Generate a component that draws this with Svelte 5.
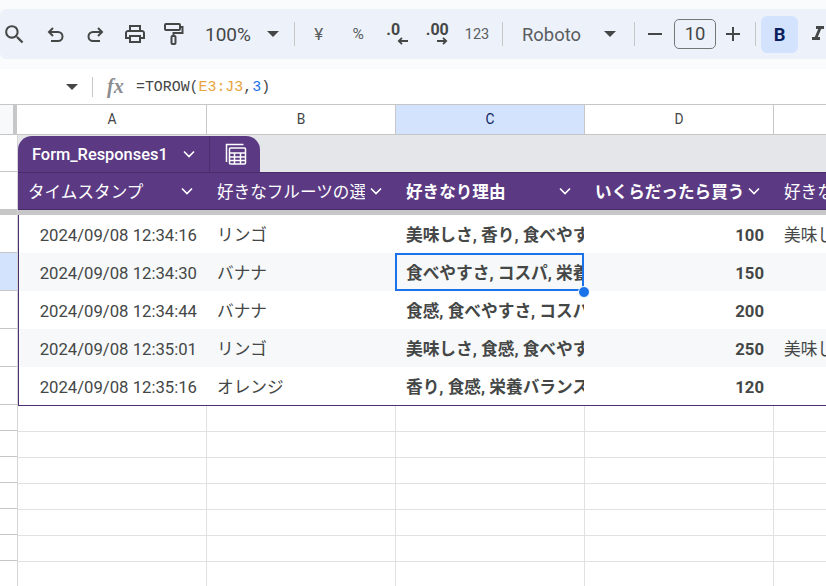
<script lang="ts">
  const columns = ['A', 'B', 'C', 'D', 'E'];
  const headers = [
    { label: 'タイムスタンプ', bold: false },
    { label: '好きなフルーツの選択', bold: false },
    { label: '好きなり理由', bold: true },
    { label: 'いくらだったら買う', bold: true },
    { label: '好きなり理由', bold: false }
  ];
  const rows = [
    { time: '2024/09/08 12:34:16', fruit: 'リンゴ', why: '美味しさ, 香り, 食べやすさ, コスパ', price: 100, extra: '美味しさ' },
    { time: '2024/09/08 12:34:30', fruit: 'バナナ', why: '食べやすさ, コスパ, 栄養バランス', price: 150, extra: '', selected: true },
    { time: '2024/09/08 12:34:44', fruit: 'バナナ', why: '食感, 食べやすさ, コスパ, 栄養', price: 200, extra: '' },
    { time: '2024/09/08 12:35:01', fruit: 'リンゴ', why: '美味しさ, 食感, 食べやすさ, 香り', price: 250, extra: '美味しさ' },
    { time: '2024/09/08 12:35:16', fruit: 'オレンジ', why: '香り, 食感, 栄養バランス, コスパ', price: 120, extra: '' }
  ];
  const emptyRows = [1, 2, 3, 4, 5, 6, 7];
</script>

{#snippet caret()}
  <svg class="caret" width="12" height="6" viewBox="0 0 12 6"><path d="M0 0h12L6 6z" fill="#444746" /></svg>
{/snippet}

{#snippet chevron()}
  <svg class="chev" width="12" height="8" viewBox="0 0 12 8"><path d="M1 1.500 6 6.500l5-5" fill="none" stroke="#fff" stroke-width="1.600" /></svg>
{/snippet}

<div class="page">
  <div class="toolbar-wrap">
    <div class="toolbar">
      <span class="btn search">
        <svg width="25" height="25" viewBox="0 0 24 24"><path fill="#444746" d="M15.500 14h-.79l-.28-.27A6.471 6.471 0 0 0 16 9.500 6.500 6.500 0 1 0 9.500 16c1.610 0 3.090-.59 4.230-1.570l.27.28v.79l5 4.990L20.490 19l-4.990-5zm-6 0C7.010 14 5 11.990 5 9.500S7.010 5 9.500 5 14 7.010 14 9.500 11.990 14 9.500 14z" /></svg>
      </span>
      <span class="btn">
        <svg width="24" height="24" viewBox="0 0 24 24" fill="none" stroke="#444746" stroke-width="2"><path d="M9 6 5 10l4 4M5 10h9a4.500 4.500 0 0 1 0 9H7" /></svg>
      </span>
      <span class="btn">
        <svg width="24" height="24" viewBox="0 0 24 24" fill="none" stroke="#444746" stroke-width="2"><path d="m15 6 4 4-4 4M19 10h-9a4.500 4.500 0 0 0 0 9h7" /></svg>
      </span>
      <span class="btn">
        <svg width="24" height="24" viewBox="0 0 24 24"><path fill="#444746" d="M19 8h-1V3H6v5H5c-1.660 0-3 1.340-3 3v6h4v4h12v-4h4v-6c0-1.660-1.340-3-3-3zM8 5h8v3H8V5zm8 12v2H8v-4h8v2zm2-2v-2H6v2H4v-4c0-.55.45-1 1-1h14c.55 0 1 .45 1 1v4h-2z" /></svg>
      </span>
      <span class="btn">
        <svg width="24" height="24" viewBox="0 0 24 24" fill="none" stroke="#444746" stroke-width="2"><rect x="3" y="2" width="15" height="6" rx="1" /><path d="M18 5h2.500v6H11.500v3" /><rect x="9.500" y="14" width="4" height="8" rx="1" /></svg>
      </span>
      <span class="zoom-val">100%</span>
      {@render caret()}
      <span class="sep s1"></span>
      <span class="btn sym yen">¥</span>
      <span class="btn sym">%</span>
      <span class="btn dec">
        <b>.0</b>
        <svg width="11" height="8" viewBox="0 0 11 8"><path d="M11 4H2M5 .8 1.800 4 5 7.200" fill="none" stroke="#444746" stroke-width="1.800" /></svg>
      </span>
      <span class="btn dec inc">
        <b>.00</b>
        <svg width="11" height="8" viewBox="0 0 11 8"><path d="M0 4h9M6 .8 9.200 4 6 7.200" fill="none" stroke="#444746" stroke-width="1.800" /></svg>
      </span>
      <span class="btn num">123</span>
      <span class="sep s2"></span>
      <span class="font-name">Roboto</span>
      {@render caret()}
      <span class="sep s3"></span>
      <span class="btn tiny">
        <svg width="14" height="2" viewBox="0 0 14 2"><path d="M0 0h14v2H0z" fill="#444746" /></svg>
      </span>
      <span class="size-box">10</span>
      <span class="btn tiny plus">
        <svg width="14" height="14" viewBox="0 0 14 14"><path d="M0 6h14v2H0zM6 0h2v14H6z" fill="#444746" /></svg>
      </span>
      <span class="sep s4"></span>
      <span class="bold-btn">B</span>
      <svg class="italic" width="24" height="24" viewBox="0 0 24 24"><path fill="#444746" d="M10 4v3h2.210l-3.420 8H6v3h8v-3h-2.210l3.420-8H18V4z" /></svg>
    </div>
  </div>

  <div class="formula-bar">
    {@render caret()}
    <span class="sep fsep"></span>
    <span class="fx">fx</span>
    <span class="formula">=TOROW(<span class="ref">E3:J3</span>,<span class="arg">3</span>)</span>
  </div>

  <div class="col-head">
    <div class="corner"></div>
    <div class="freeze"></div>
    {#each columns as col}
      <div class="col-cell" class:active={col === 'C'}>{col}</div>
    {/each}
  </div>

  <div class="sheet">
    <div class="row-head">
      <div class="rh r37"></div>
      <div class="rh r38"></div>
      <div class="rh-bar"></div>
      {#each rows as row}
        <div class="rh r38" class:active={row.selected}></div>
      {/each}
      {#each emptyRows as r (r)}
        <div class="rh r26"></div>
      {/each}
    </div>

    <div class="content">
      <div class="table">
        <div class="strip">
          <div class="tab">
            <span class="tab-name">Form_Responses1</span>
            {@render chevron()}
            <span class="tab-div"></span>
            <svg class="calc" width="22" height="22" viewBox="0 0 22 22" fill="none" stroke="#fff" stroke-width="1.500">
              <path d="M1.500 19V1.500h17" />
              <rect x="4.500" y="5" width="16" height="16" rx="1" />
              <path d="M4.500 10h16M4.500 14h16M4.500 17.500h16M9.500 10v11M15.500 10v11" />
            </svg>
          </div>
        </div>

        <div class="head-row">
          {#each headers as h}
            <div class="head-cell" class:strong={h.bold}>
              <span class="head-label">{h.label}</span>
              {@render chevron()}
            </div>
          {/each}
        </div>
        <div class="head-bar"></div>

        {#each rows as row, i}
          <div class="data-row" class:alt={i % 2 === 1}>
            <div class="cell time"><span class="clip">{row.time}</span></div>
            <div class="cell"><span class="clip">{row.fruit}</span></div>
            <div class="cell strong">
              <span class="clip">{row.why}</span>
              {#if row.selected}
                <span class="select-box"><span class="handle"></span></span>
              {/if}
            </div>
            <div class="cell strong price"><span class="clip">{row.price}</span></div>
            <div class="cell"><span class="clip">{row.extra}</span></div>
          </div>
        {/each}
      </div>

      {#each emptyRows as r (r)}
        <div class="empty-row">
          {#each columns as col (col)}
            <div class="empty-cell"></div>
          {/each}
        </div>
      {/each}
    </div>
  </div>
</div>

<style>
  :global(body) {
    margin: 0;
    background: #fff;
  }

  .page {
    width: 826px;
    height: 586px;
    overflow: hidden;
    font-family: Roboto, 'Noto Sans CJK JP', sans-serif;
    color: #444746;
    background: #fff;
  }

  .toolbar-wrap {
    background: #f9fbfd;
    padding: 9px 0 10px;
  }

  .toolbar {
    height: 50px;
    background: #edf2fa;
    border-radius: 6px 0 0 6px;
    display: flex;
    align-items: center;
    overflow: hidden;
  }

  .btn {
    flex: none;
    width: 39.500px;
    display: flex;
    align-items: center;
    justify-content: center;
  }

  .btn.search {
    width: 28px;
    margin-right: 8px;
  }

  .zoom-val {
    flex: none;
    font-size: 19px;
    margin-left: 11px;
    width: 62px;
  }

  .caret {
    flex: none;
  }

  .sep {
    flex: none;
    width: 1px;
    background: #c7c7c7;
    height: 24px;
  }

  .s1 {
    margin: 0 4px 0 15px;
  }

  .sym {
    font-size: 15.500px;
    color: #5a5c5e;
  }

  .yen {
    font-size: 17px;
  }

  .dec {
    flex-direction: column;
    font-size: 16px;
    line-height: 14px;
  }

  .dec b {
    font-weight: 700;
    margin-right: 9px;
  }

  .dec svg {
    margin: 0 0 0 10px;
  }

  .dec.inc b {
    margin-right: 0;
  }

  .num {
    font-size: 14.500px;
    color: #5a5c5e;
    width: 40px;
  }

  .s2 {
    margin: 0 19px 0 5px;
  }

  .font-name {
    flex: none;
    width: 82px;
    font-size: 18.400px;
    color: #5a5c5e;
  }

  .s3 {
    margin: 0 0 0 18px;
  }

  .btn.tiny {
    width: 39px;
  }

  .btn.plus {
    width: 34px;
  }

  .size-box {
    flex: none;
    width: 40px;
    height: 28px;
    border: 1px solid #747775;
    border-radius: 5px;
    text-align: center;
    line-height: 28px;
    font-size: 18.400px;
  }

  .s4 {
    margin: 0 5px;
  }

  .bold-btn {
    flex: none;
    width: 37px;
    height: 37px;
    background: #d3e3fd;
    border-radius: 6px;
    text-align: center;
    line-height: 37px;
    font-size: 18.400px;
    font-weight: 700;
    color: #0b1f5c;
  }

  .italic {
    flex: none;
    margin-left: 8px;
  }

  .formula-bar {
    height: 35px;
    display: flex;
    align-items: center;
    padding-left: 66px;
    background: #fff;
  }

  .fsep {
    margin: 0 14px 0 14px;
    height: 20px;
  }

  .fx {
    width: 29px;
    font-family: 'Liberation Serif', serif;
    font-style: italic;
    font-weight: 700;
    font-size: 20px;
    color: #8a8c8e;
  }

  .formula {
    font-family: 'Liberation Mono', monospace;
    font-size: 14.900px;
    color: #444746;
  }

  .ref {
    color: #e8a33d;
  }

  .arg {
    color: #1a73e8;
  }

  .col-head {
    height: 29px;
    display: flex;
    border-top: 1px solid #c4c7c5;
    border-bottom: 1px solid #c4c7c5;
  }

  .corner {
    flex: none;
    width: 13px;
    background: #f8f9fa;
  }

  .freeze {
    flex: none;
    width: 4px;
    background: #c7c7c7;
    margin-right: 1px;
  }

  .col-cell {
    flex: none;
    width: 188px;
    border-right: 1px solid #c7c7c7;
    text-align: center;
    font-size: 13.800px;
    line-height: 29px;
    color: #444746;
  }

  .col-cell.active {
    background: #d3e3fd;
    color: #0b1f5c;
  }

  .sheet {
    display: flex;
  }

  .row-head {
    flex: none;
    width: 17px;
    border-right: 1px solid #d5d5d5;
  }

  .rh {
    box-sizing: border-box;
    border-bottom: 1px solid #c7c7c7;
  }

  .r37 {
    height: 37px;
  }

  .r38 {
    height: 38px;
  }

  .r26 {
    height: 26px;
  }

  .rh.active {
    background: #d3e3fd;
  }

  .rh-bar {
    height: 5px;
    background: #c7c7c7;
  }

  .content {
    flex: none;
    width: 945px;
  }

  .table {
    border-bottom: 1px solid #4b2f73;
  }

  .strip {
    height: 37px;
    padding-top: 1px;
    box-sizing: border-box;
    background: #e5e6ea;
  }

  .tab {
    width: 242px;
    height: 36px;
    background: #5b3a83;
    border-radius: 14px 14px 0 0;
    display: flex;
    align-items: center;
    color: #fff;
    padding-left: 14px;
    box-sizing: border-box;
  }

  .tab-name {
    width: 151px;
    font-size: 16.400px;
    font-weight: 500;
  }

  .tab-div {
    width: 1px;
    height: 36px;
    background: #4a2e6e;
    margin: 0 15px 0 14px;
  }

  .head-row {
    display: flex;
    height: 38px;
    background: #5b3a83;
    color: #fff;
    border-top: 1px solid #472c6b;
    border-bottom: 1px solid #472c6b;
    box-sizing: border-box;
  }

  .head-cell {
    flex: none;
    width: 189px;
    box-sizing: border-box;
    padding: 0 14px 1px 10px;
    display: flex;
    align-items: center;
    justify-content: space-between;
    font-size: 16.600px;
  }

  .head-label {
    overflow: hidden;
    white-space: nowrap;
    width: 148px;
  }

  .head-cell.strong {
    font-weight: 700;
  }

  .head-cell.strong .head-label {
    width: 151px;
  }

  .head-bar {
    height: 5px;
    background: #c7c7c7;
  }

  .data-row {
    display: flex;
    height: 38px;
    background: #fff;
  }

  .data-row.alt {
    background: #f6f8f9;
  }

  .cell {
    flex: none;
    position: relative;
    width: 189px;
    height: 38px;
    box-sizing: border-box;
    padding: 0 1px 0 10px;
    font-size: 16.700px;
    white-space: nowrap;
    color: #444746;
  }

  .clip {
    display: block;
    height: 38px;
    line-height: 42px;
    overflow: hidden;
  }

  .cell.time {
    border-left: 1px solid #4b2f73;
    text-align: right;
    padding-right: 10px;
    padding-left: 0;
  }

  .cell.strong {
    font-weight: 700;
  }

  .cell.price {
    text-align: right;
    padding-right: 10px;
  }

  .select-box {
    position: absolute;
    inset: 0 1px 0 -1px;
    border: 2px solid #1a73e8;
    pointer-events: none;
  }

  .handle {
    position: absolute;
    right: -8px;
    bottom: -9px;
    width: 10px;
    height: 10px;
    border-radius: 50%;
    background: #1a73e8;
    border: 1px solid #fff;
  }

  .empty-row {
    display: flex;
    height: 26px;
    box-sizing: border-box;
    border-bottom: 1px solid #e1e1e1;
  }

  .empty-cell {
    flex: none;
    width: 189px;
    box-sizing: border-box;
    border-right: 1px solid #e1e1e1;
  }
</style>
